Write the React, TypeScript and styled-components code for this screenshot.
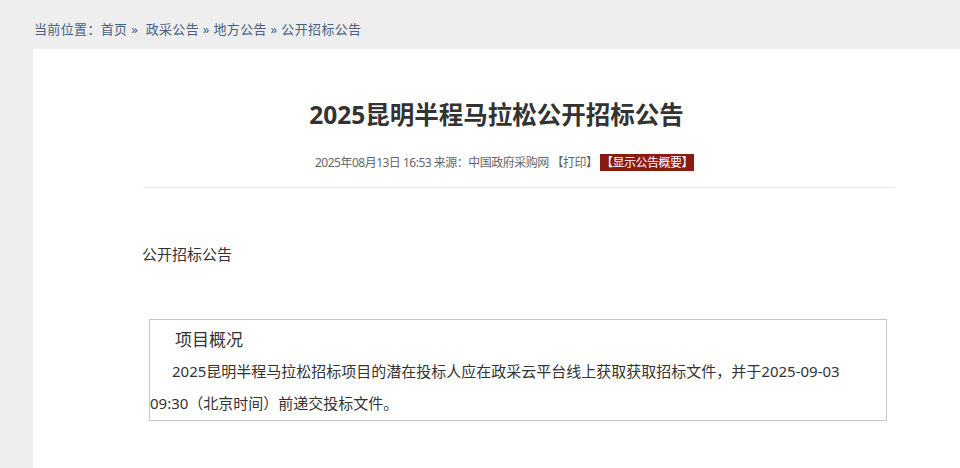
import styled, { createGlobalStyle } from 'styled-components';

const GlobalStyle = createGlobalStyle`
  html, body {
    margin: 0;
    padding: 0;
    background-color: #eeeeee;
    font-family: "Noto Sans", "Noto Sans CJK SC", sans-serif;
  }

  *, *::before, *::after {
    box-sizing: border-box;
  }
`;

const crumbs = ['首页', '政采公告', '地方公告', '公开招标公告'];

function Breadcrumb() {
  return (
    <Crumbs>
      当前位置：
      {crumbs.map((name, index) => (
        <span key={name}>
          {index > 0 && <Sep>{index === 1 ? ' »\u00a0\u00a0' : ' » '}</Sep>}
          <CrumbLink>{name}</CrumbLink>
        </span>
      ))}
    </Crumbs>
  );
}

function App() {
  return (
    <>
      <GlobalStyle />
      <Breadcrumb />
      <Card>
        <Header>
          <Title>2025昆明半程马拉松公开招标公告</Title>
          <Meta>
            2025年08月13日 16:53 来源：中国政府采购网 【打印】 <Badge>【显示公告概要】</Badge>
          </Meta>
        </Header>
        <Intro>公开招标公告</Intro>
        <Summary>
          <SummaryTitle>项目概况</SummaryTitle>
          <SummaryText>
            2025昆明半程马拉松招标项目的潜在投标人应在政采云平台线上获取获取招标文件，并于2025-09-03
            <br />
            09:30（北京时间）前递交投标文件。
          </SummaryText>
        </Summary>
      </Card>
    </>
  );
}

const Crumbs = styled.div`
  height: 49px;
  padding: 19px 0 0 34px;
  font-size: 13px;
  line-height: 20px;
  letter-spacing: 0.35px;
  color: #4b5f80;
  white-space: pre;
`;

const CrumbLink = styled.a`
  color: #4b5f80;
  text-decoration: none;
`;

const Sep = styled.span`
  color: #4b5f80;
`;

const Card = styled.main`
  margin-left: 33px;
  min-height: calc(100vh - 49px);
  padding: 48px 65px 30px 109px;
  background-color: #ffffff;
`;

const Header = styled.header`
  padding: 0 44px 14px 0;
  border-bottom: 1px solid #e8e8e8;
  text-align: center;
`;

const Title = styled.h1`
  margin: 0;
  font-size: 24.5px;
  line-height: 36px;
  font-weight: 700;
  color: #333333;
`;

const Meta = styled.div`
  margin-top: 20px;
  padding-left: 16px;
  font-size: 12px;
  line-height: 20px;
  letter-spacing: -0.5px;
  color: #666666;
`;

const Badge = styled.span`
  padding: 0 1px;
  background-color: #8b1a10;
  color: #ffffff;
`;

const Intro = styled.p`
  margin: 54px 0 0;
  font-size: 15px;
  line-height: 24px;
  color: #333333;
`;

const Summary = styled.section`
  margin: 53px 8px 0 7px;
  padding: 5px 0 1px;
  border: 1px solid #c4c4c4;
`;

const SummaryTitle = styled.h3`
  margin: 0;
  padding-left: 25px;
  font-size: 17px;
  line-height: 30px;
  font-weight: 400;
  color: #333333;
`;

const SummaryText = styled.p`
  margin: 0;
  text-indent: 22px;
  font-size: 15px;
  line-height: 32px;
  color: #333333;
`;

export default App;
